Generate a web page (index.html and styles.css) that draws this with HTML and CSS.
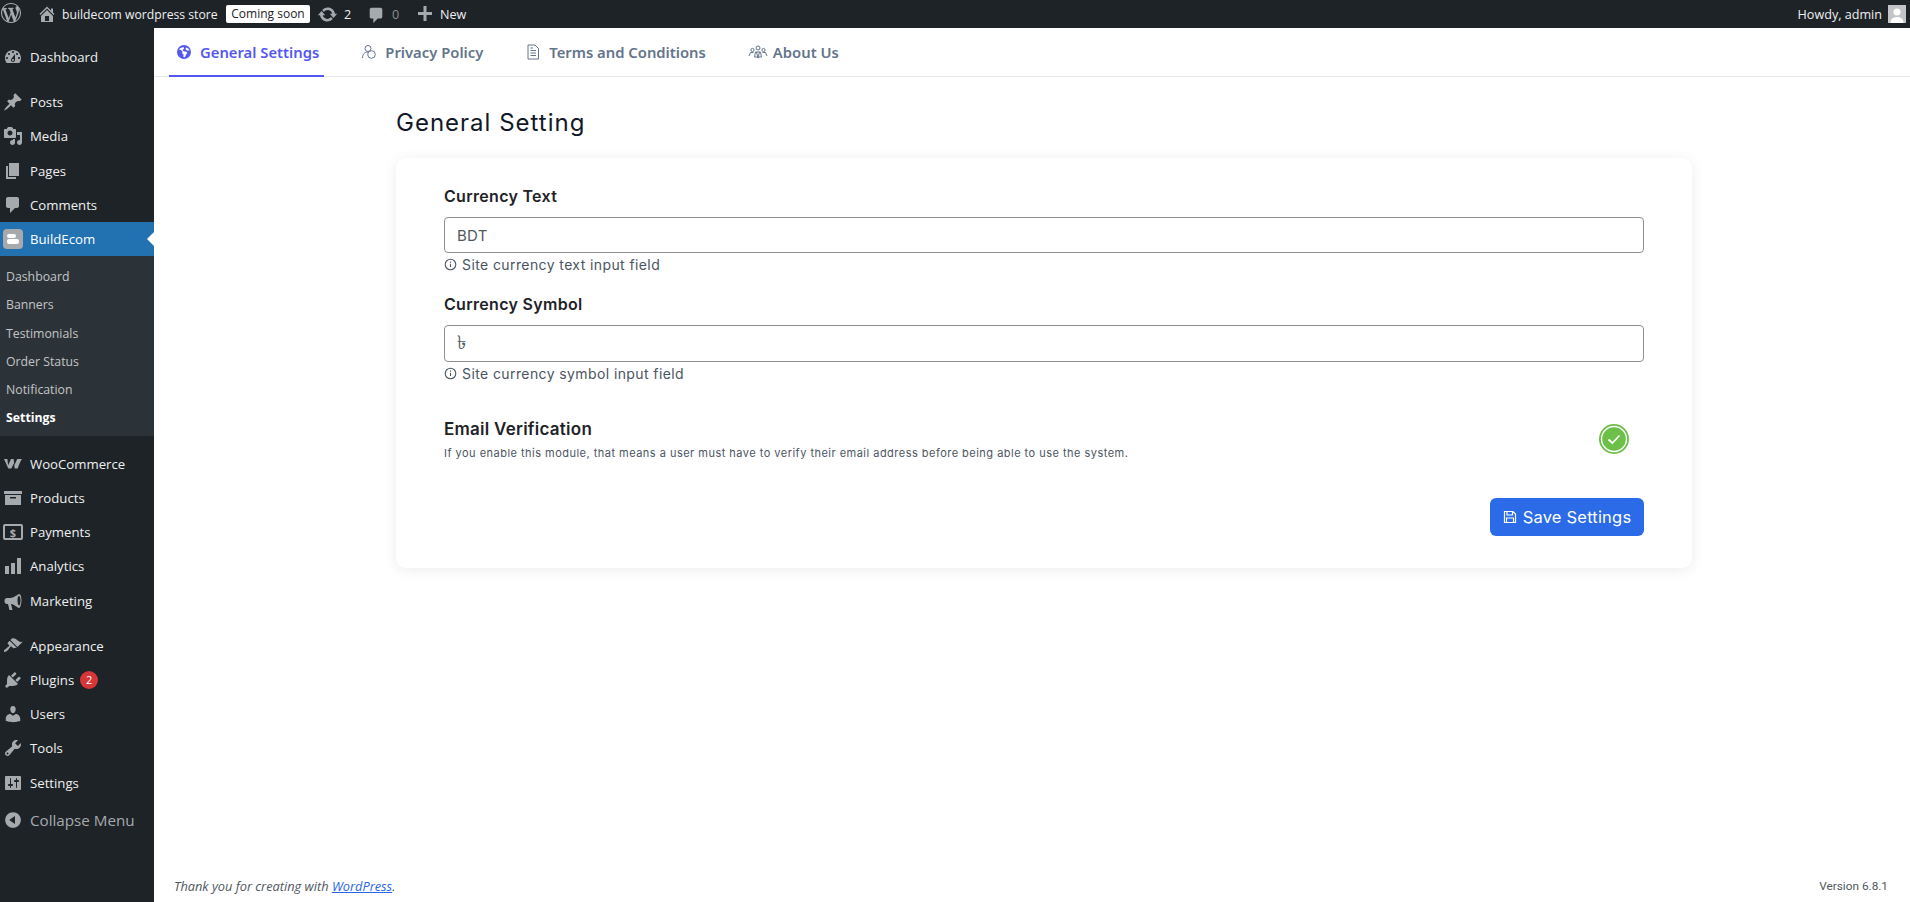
FILE: index.html
```html
<!DOCTYPE html>
<html lang="en">
<head>
    <meta charset="UTF-8">
    <title>General Settings - BuildEcom</title>
    <link rel="stylesheet" href="styles.css">
</head>
<body>
    <!-- Admin bar -->
    <div class="adminbar">
        <div class="bar-left">
            <svg class="bar-logo" viewBox="0 0 20 20"><path d="M20 10c0-5.51-4.49-10-10-10C4.48 0 0 4.49 0 10c0 5.52 4.48 10 10 10 5.51 0 10-4.48 10-10zM7.78 15.37L4.37 6.22c.55-.02 1.17-.08 1.17-.08.5-.06.44-1.13-.06-1.11 0 0-1.45.11-2.37.11-.18 0-.37 0-.58-.01C4.12 2.69 6.87 1.11 10 1.11c2.33 0 4.45.87 6.05 2.34-.68-.11-1.65.39-1.65 1.58 0 .74.45 1.36.9 2.1.35.61.55 1.36.55 2.46 0 1.49-1.4 5-1.4 5l-3.03-8.37c.54-.02.82-.17.82-.17.5-.05.44-1.25-.06-1.22 0 0-1.44.12-2.38.12-.87 0-2.33-.12-2.33-.12-.5-.03-.56 1.2-.06 1.22l.92.08 1.26 3.41zM17.41 10c.24-.64.74-1.87.43-4.25.7 1.29 1.05 2.71 1.05 4.25 0 3.29-1.73 6.24-4.4 7.78.97-2.59 1.94-5.2 2.92-7.78zM6.1 18.09C3.12 16.65 1.11 13.53 1.11 10c0-1.3.23-2.48.72-3.59C3.25 10.3 4.67 14.2 6.1 18.09zm4.03-6.63l2.58 6.98c-.86.29-1.76.45-2.71.45-.79 0-1.57-.11-2.29-.33.81-2.38 1.62-4.74 2.42-7.1z"/></svg>
            <svg class="bar-icon home" viewBox="0 0 20 20"><path d="M16 8.5l1.53 1.53-1.06 1.06L10 4.62l-6.47 6.47-1.06-1.06L10 2.5l4 4v-2h2v4zm-6-2.46l6 5.99V18H4v-5.97zM12 17v-5H8v5h4z"/></svg>
            <span class="site-name">buildecom wordpress store</span>
            <span class="badge-soon">Coming soon</span>
            <svg class="bar-icon update" viewBox="0 0 20 20"><path d="M10.2 3.28c3.53 0 6.43 2.61 6.92 6h2.08l-3.5 4-3.5-4h2.32c-.45-1.97-2.21-3.45-4.32-3.45-1.45 0-2.73.71-3.54 1.78L4.95 5.66C6.23 4.2 8.11 3.28 10.2 3.28zm-.4 13.44c-3.52 0-6.43-2.61-6.92-6H.8l3.5-4c1.17 1.33 2.33 2.67 3.5 4H5.48c.45 1.97 2.21 3.45 4.32 3.45 1.45 0 2.73-.71 3.54-1.78l1.71 1.95c-1.28 1.46-3.15 2.38-5.25 2.38z"/></svg>
            <span class="count">2</span>
            <svg class="bar-icon comment" viewBox="0 0 20 20"><path d="M5 2h10c1.1 0 2 .9 2 2v8c0 1.1-.9 2-2 2h-3l-5 5v-5H5c-1.1 0-2-.9-2-2V4c0-1.1.9-2 2-2z"/></svg>
            <span class="count dim">0</span>
            <svg class="bar-icon plus" viewBox="0 0 20 20"><path d="M17 8v3h-5.5v6h-3v-6H3V8h5.5V2h3v6z"/></svg>
            <span class="new">New</span>
        </div>
        <div class="bar-right">
            <span>Howdy, admin</span>
            <span class="avatar">
                <svg viewBox="0 0 18 18"><circle cx="9" cy="7" r="3.6"/><path d="M2.5 18c0-4 2.6-6 6.5-6s6.5 2 6.5 6z"/></svg>
            </span>
        </div>
    </div>

    <div class="layout">
        <!-- Sidebar -->
        <div class="sidebar">
            <a class="item">
                <svg viewBox="0 0 20 20"><path d="M3.76 16h12.48c1.1-1.37 1.76-3.11 1.76-5 0-4.42-3.58-8-8-8s-8 3.58-8 8c0 1.89.66 3.63 1.76 5zM10 4c.55 0 1 .45 1 1s-.45 1-1 1-1-.45-1-1 .45-1 1-1zM6 6c.55 0 1 .45 1 1s-.45 1-1 1-1-.45-1-1 .45-1 1-1zm8 0c.55 0 1 .45 1 1s-.45 1-1 1-1-.45-1-1 .45-1 1-1zm-5.37 5.55L12 7v6c0 1.1-.9 2-2 2s-2-.9-2-2c0-.57.24-1.08.63-1.45zM4 10c.55 0 1 .45 1 1s-.45 1-1 1-1-.45-1-1 .45-1 1-1zm12 0c.55 0 1 .45 1 1s-.45 1-1 1-1-.45-1-1 .45-1 1-1zm-5 3c0-.55-.45-1-1-1s-1 .45-1 1 .45 1 1 1 1-.45 1-1z"/></svg>
                Dashboard
            </a>
            <div class="sep"></div>
            <a class="item">
                <svg viewBox="0 0 20 20"><path d="M10.44 3.02l1.82-1.82 6.36 6.35-1.83 1.82c-1.05-.68-2.48-.57-3.41.36l-.75.75c-.92.93-1.04 2.35-.35 3.41l-1.83 1.82-2.41-2.41-2.8 2.79c-.42.42-3.38 2.71-3.8 2.29s1.86-3.39 2.28-3.81l2.79-2.79L4.1 9.36l1.83-1.82c1.05.69 2.48.57 3.4-.36l.75-.75c.93-.92 1.05-2.35.36-3.41z"/></svg>
                Posts
            </a>
            <a class="item">
                <svg viewBox="0 0 20 20"><path d="M13 11V4c0-.55-.45-1-1-1h-1.67L9 1H5L3.67 3H2c-.55 0-1 .45-1 1v7c0 .55.45 1 1 1h10c.55 0 1-.45 1-1zM7 4.5c1.38 0 2.5 1.12 2.5 2.5S8.38 9.5 7 9.5 4.5 8.38 4.5 7 5.62 4.5 7 4.5zM14 6h5v10.5c0 1.38-1.12 2.5-2.5 2.5S14 17.88 14 16.5s1.12-2.5 2.5-2.5c.17 0 .34.02.5.05V9h-3V6zm-4 8.05V13h2v3.5c0 1.38-1.12 2.5-2.5 2.5S7 17.88 7 16.5 8.12 14 9.5 14c.17 0 .34.02.5.05z"/></svg>
                Media
            </a>
            <a class="item">
                <svg viewBox="0 0 20 20"><path d="M6 15V2h10v13H6zm-1 1h8v2H3V5h2v11z"/></svg>
                Pages
            </a>
            <a class="item">
                <svg viewBox="0 0 20 20"><path d="M5 2h9c1.1 0 2 .9 2 2v7c0 1.1-.9 2-2 2h-2l-5 5v-5H5c-1.1 0-2-.9-2-2V4c0-1.1.9-2 2-2z"/></svg>
                Comments
            </a>
            <a class="item current">
                <span class="be-logo"><i class="pill-a"></i><i class="pill-b"></i></span>
                BuildEcom
            </a>
            <div class="submenu">
                <a>Dashboard</a>
                <a>Banners</a>
                <a>Testimonials</a>
                <a>Order Status</a>
                <a>Notification</a>
                <a class="on">Settings</a>
            </div>
            <div class="sep"></div>
            <a class="item">
                <svg viewBox="0 0 20 20"><path d="M1 5h3.4l.7 6.2L8 5h2.6l.8 6.2L14.2 5c1.4 0 3.4-.2 4.8 0-.9 1.3-2.9 4.8-4.3 9.5h-3L11 9.3 8.3 14.5H5.3z"/></svg>
                WooCommerce
            </a>
            <a class="item">
                <svg viewBox="0 0 20 20"><path d="M1 3h18v3H1zM2 7h16v10H2zM7 9v1.5h6V9z" fill-rule="evenodd"/></svg>
                Products
            </a>
            <a class="item">
                <span class="pay-icon">$</span>
                Payments
            </a>
            <a class="item">
                <svg viewBox="0 0 20 20"><path d="M2 10h4v8H2zM8 7h4v11H8zM14 2h4v16h-4z"/></svg>
                Analytics
            </a>
            <a class="item">
                <svg viewBox="0 0 20 20"><path d="M18.5 9c0-3-1-6-2.5-6-1 0-4 3.5-9 4H4C2.5 7 1.5 8 1.5 10S2.5 13 4 13h1l1.5 6h3L8 13.1c3.6.6 6.6 3.9 8 3.9 1.5 0 2.5-5 2.5-8zM16 14.5c-.8 0-1.5-2.5-1.5-5.5S15.2 5 16 5s1.5 1.5 1.5 4.5-.7 5-1.5 5z" fill-rule="evenodd"/></svg>
                Marketing
            </a>
            <div class="sep"></div>
            <a class="item">
                <svg viewBox="0 0 20 20"><path d="M14.48 11.06L7.41 3.99l1.5-1.5c.5-.56 2.3-.47 3.51.32 1.21.8 1.43 1.28 2.91 2.1 1.18.64 2.45 1.26 4.45.85zm-.71.71L6.7 4.7 4.93 6.47c-.39.39-.39 1.02 0 1.41l1.06 1.06c.39.39.39 1.03 0 1.42-.6.6-1.43 1.11-2.21 1.69-.35.26-.7.53-1.01.84C1.43 13.23.4 14.84 1.19 15.63c.79.79 2.4-.24 3.74-1.58.31-.31.58-.66.84-1.01.58-.78 1.09-1.61 1.69-2.21.39-.39 1.02-.39 1.41 0l1.06 1.06c.39.39 1.02.39 1.41 0z"/></svg>
                Appearance
            </a>
            <a class="item">
                <svg viewBox="0 0 20 20"><path d="M13.11 4.36L9.87 7.6 8 5.73l3.24-3.24c.35-.34 1.05-.2 1.56.32.52.51.66 1.21.31 1.55zm-8 1.77l.91-1.12 9.01 9.01-1.19.84c-.71.71-2.63 1.16-3.82 1.16H6.14L4.9 17.26c-.59.59-1.54.59-2.12 0-.59-.58-.59-1.53 0-2.12l1.24-1.24v-3.88c0-1.13.4-3.19 1.09-3.89zm7.26 3.97l3.24-3.24c.34-.35 1.04-.21 1.55.31.52.51.66 1.21.31 1.55l-3.24 3.25z"/></svg>
                Plugins <span class="count-badge">2</span>
            </a>
            <a class="item">
                <svg viewBox="0 0 20 20"><path d="M10 9.25c-2.27 0-2.73-3.44-2.73-3.44C7 4.02 7.82 2 9.97 2c2.16 0 2.98 2.02 2.71 3.81 0 0-.41 3.44-2.68 3.44zm0 2.57L12.72 10c2.39 0 4.52 2.33 4.52 4.53v2.49s-3.65 1.13-7.24 1.13c-3.65 0-7.24-1.13-7.24-1.13v-2.49c0-2.25 1.94-4.48 4.47-4.48z"/></svg>
                Users
            </a>
            <a class="item">
                <svg viewBox="0 0 20 20"><path d="M16.68 9.77c-1.34 1.34-3.3 1.67-4.95.99l-5.41 6.52c-.99.99-2.59.99-3.58 0s-.99-2.59 0-3.57l6.52-5.42c-.68-1.65-.35-3.61.99-4.95 1.28-1.28 3.12-1.62 4.72-1.06l-2.89 2.89 2.82 2.82 2.86-2.87c.53 1.58.18 3.39-1.08 4.65zM3.81 16.21c.4.39 1.04.39 1.43 0 .4-.4.4-1.04 0-1.43-.39-.4-1.03-.4-1.43 0-.39.39-.39 1.03 0 1.43z"/></svg>
                Tools
            </a>
            <a class="item">
                <svg viewBox="0 0 20 20"><path d="M18 16V4c0-.55-.45-1-1-1H3c-.55 0-1 .45-1 1v12c0 .55.45 1 1 1h14c.55 0 1-.45 1-1zM8 11h1c.55 0 1 .45 1 1s-.45 1-1 1H8v1.5c0 .28-.22.5-.5.5s-.5-.22-.5-.5V13H6c-.55 0-1-.45-1-1s.45-1 1-1h1V5.5c0-.28.22-.5.5-.5s.5.22.5.5V11zm5-2h-1c-.55 0-1-.45-1-1s.45-1 1-1h1V5.5c0-.28.22-.5.5-.5s.5.22.5.5V7h1c.55 0 1 .45 1 1s-.45 1-1 1h-1v5.5c0 .28-.22.5-.5.5s-.5-.22-.5-.5V9z"/></svg>
                Settings
            </a>
            <a class="item collapse">
                <svg viewBox="0 0 20 20"><path d="M10 2.16c4.33 0 7.84 3.51 7.84 7.84s-3.51 7.84-7.84 7.84S2.16 14.33 2.16 10 5.71 2.16 10 2.16zm2 11.72V6.12L6.18 9.97z"/></svg>
                Collapse Menu
            </a>
        </div>

        <!-- Main -->
        <div class="main">
            <div class="tabs">
                <a class="tab active">
                    <svg viewBox="0 0 16 16" class="tab-icon"><path fill-rule="evenodd" d="M8 1a7 7 0 1 0 0 14A7 7 0 0 0 8 1zM3 5.5l2 .5 1.5 1.5L6 9l1.5 1.5V13l1.5.2 1-2.7 1.5-1.5-1.5-1.5H8L6.5 6 8 4.8V3.2c-2-.2-3.8.6-5 2.3zM10 3.5l-.5 1.5 1.5 1.5h2.5c-.5-1.5-2-2.7-3.5-3z"/></svg>
                    General Settings
                </a>
                <a class="tab">
                    <svg viewBox="0 0 16 16" class="tab-icon line"><circle cx="7" cy="4.5" r="3"/><path d="M1.5 14c0-3.5 1.8-6 5.5-6"/><circle cx="10.5" cy="10.5" r="3.8"/></svg>
                    Privacy Policy
                </a>
                <a class="tab">
                    <svg viewBox="0 0 16 16" class="tab-icon line"><path d="M3 1h7l3.5 3.5V15H3zM5.500 6.500h5.500M5.500 9h5.500M5.500 11.500h5.500M5.500 4h2.500"/></svg>
                    Terms and Conditions
                </a>
                <a class="tab">
                    <svg viewBox="0 0 20 16" class="tab-icon line wide"><circle cx="10" cy="4" r="2"/><circle cx="4.5" cy="6" r="1.6"/><circle cx="15.5" cy="6" r="1.6"/><path d="M6.5 13l1-5h5l1 5zM1 12l1.5-3.5h3M19 12l-1.5-3.5h-3M8.5 8l1.5 6 1.5-6"/></svg>
                    About Us
                </a>
            </div>

            <div class="content">
                <h1 class="page-title">General Setting</h1>
                <div class="card">
                    <label class="field-label">Currency Text</label>
                    <input class="field-input" type="text" value="BDT">
                    <p class="hint">
                        <svg viewBox="0 0 12 12"><circle cx="6" cy="6" r="4.9"/><path d="M6 5.4v3M6 3.3v1"/></svg>
                        Site currency text input field
                    </p>

                    <label class="field-label second">Currency Symbol</label>
                    <input class="field-input tall" type="text" value="৳">
                    <p class="hint">
                        <svg viewBox="0 0 12 12"><circle cx="6" cy="6" r="4.9"/><path d="M6 5.4v3M6 3.3v1"/></svg>
                        Site currency symbol input field
                    </p>

                    <div class="module-row">
                        <div>
                            <h3>Email Verification</h3>
                            <p>If you enable this module, that means a user must have to verify their email address before being able to use the system.</p>
                        </div>
                        <span class="toggle">
                            <svg viewBox="0 0 30 30"><circle cx="15" cy="15" r="15" fill="#6cbf47"/><circle cx="15" cy="15" r="12.5" fill="none" stroke="#fff" stroke-width="1.4"/><path d="M9.5 15.5l3.8 3.5 7.2-7.5" fill="none" stroke="#fff" stroke-width="1.7"/></svg>
                        </span>
                    </div>

                    <div class="actions">
                        <button class="save-btn">
                            <svg viewBox="0 0 14 14"><path d="M1.5 1.5h8.5l2.5 2.5v8.5h-11zM4 1.5v3.5h5.5V1.5M3.5 12.500V8h7v4.500"/></svg>
                            Save Settings
                        </button>
                    </div>
                </div>
            </div>

            <div class="footer">
                <span class="thanks">Thank you for creating with <a>WordPress</a>.</span>
                <span class="version">Version 6.8.1</span>
            </div>
        </div>
    </div>
</body>
</html>
```

FILE: styles.css
```css
* {
    margin: 0;
    padding: 0;
    box-sizing: border-box;
}

html, body {
    height: 902px;
    overflow: hidden;
}

body {
    background: #fff;
    color: #1d2327;
    font-family: "Open Sans", sans-serif;
    font-size: 13px;
}

/* Admin bar */
.adminbar {
    display: flex;
    justify-content: space-between;
    align-items: center;
    height: 28px;
    background: #1d2327;
    color: #f0f0f1;
    font-size: 12.6px;
}

.bar-left, .bar-right {
    display: flex;
    align-items: center;
}

.bar-logo {
    width: 20px;
    height: 20px;
    margin: -3px 0 0 1px;
    fill: #a7aaad;
}

.bar-icon {
    fill: #a7aaad;
    flex: none;
}

.home {
    width: 20px;
    height: 20px;
    margin-left: 16px;
}

.site-name {
    margin-left: 5px;
    width: 159px;
    font-size: 12.2px;
    white-space: nowrap;
}

.badge-soon {
    margin: 0 0 0 5px;
    width: 84px;
    height: 18px;
    line-height: 18px;
    background: #fff;
    color: #1d2327;
    border-radius: 2px;
    text-align: center;
    font-size: 12px;
}

.update {
    width: 21px;
    height: 21px;
    margin-left: 7px;
}

.count {
    margin-left: 6px;
    width: 8px;
}

.count.dim {
    color: #8c8f94;
    margin-left: 7px;
}

.comment {
    width: 18px;
    height: 18px;
    margin: 2px 0 0 15px;
}

.plus {
    width: 20px;
    height: 20px;
    margin-left: 15px;
}

.new {
    margin-left: 5px;
}

.bar-right {
    gap: 6px;
    padding-right: 4px;
}

.avatar {
    display: block;
    width: 18px;
    height: 18px;
    background: #c3c4c7;
    overflow: hidden;
}

.avatar svg {
    display: block;
    fill: #fff;
}

/* Layout */
.layout {
    display: flex;
    height: 874px;
}

/* Sidebar */
.sidebar {
    width: 154px;
    flex: none;
    background: #1d2327;
    padding-top: 12px;
}

.item {
    display: flex;
    align-items: center;
    position: relative;
    height: 34.2px;
    padding-left: 3px;
    color: #f0f0f1;
    font-size: 13.2px;
}

.item svg {
    width: 20px;
    height: 20px;
    flex: none;
    fill: #a7aaad;
    margin-right: 7px;
}

.sep {
    height: 11px;
}

.item.current {
    background: #2271b1;
    color: #fff;
}

.item.current::after {
    content: "";
    position: absolute;
    right: 0;
    top: 10px;
    border: 7px solid transparent;
    border-right-color: #fff;
    border-left-width: 0;
}

.be-logo {
    display: flex;
    flex-direction: column;
    align-items: center;
    justify-content: center;
    gap: 1px;
    width: 20px;
    height: 20px;
    flex: none;
    margin-right: 7px;
    background: #a7aaad;
    border-radius: 4px;
}

.be-logo i {
    display: block;
    background: #fff;
    border-radius: 2px;
}

.pill-a {
    width: 9px;
    height: 4px;
    margin-left: -3px;
}

.pill-b {
    width: 12px;
    height: 5px;
}

.submenu {
    background: #2c3338;
    padding: 7px 0 3.5px;
}

.submenu a {
    display: block;
    height: 28.2px;
    line-height: 28.2px;
    padding-left: 6px;
    color: #c3c4c7;
    font-size: 12.3px;
}

.submenu a.on {
    color: #fff;
    font-weight: 700;
}

.pay-icon {
    display: block;
    width: 20px;
    height: 16px;
    line-height: 13px;
    flex: none;
    margin-right: 7px;
    border: 2px solid #a7aaad;
    border-radius: 2px;
    color: #a7aaad;
    font-size: 11px;
    font-weight: 700;
    text-align: center;
}

.count-badge {
    display: inline-block;
    width: 18px;
    height: 18px;
    line-height: 18px;
    margin-left: 6px;
    background: #d63638;
    border-radius: 50%;
    color: #fff;
    font-size: 11px;
    text-align: center;
}

.collapse {
    margin-top: 3px;
    color: #a7aaad;
    font-size: 15.2px;
}

/* Main */
.main {
    flex: 1;
    display: flex;
    flex-direction: column;
    min-width: 0;
}

.tabs {
    display: flex;
    gap: 30px;
    height: 49px;
    padding-left: 15px;
    border-bottom: 1px solid #e5e7eb;
}

.tab {
    display: flex;
    align-items: center;
    height: 49px;
    padding: 0 5px 0 7px;
    border-bottom: 2px solid transparent;
    color: #64748b;
    font-family: "Noto Sans", sans-serif;
    font-size: 14.8px;
    font-weight: 600;
}

.tab.active {
    color: #5558f0;
    border-bottom-color: #5558f0;
}

.tab-icon {
    width: 16px;
    height: 16px;
    margin-right: 8px;
    fill: currentColor;
}

.tab-icon.line {
    fill: none;
    stroke: currentColor;
    stroke-width: 1;
}

.tab-icon.wide {
    width: 20px;
    margin-right: 5px;
}

.content {
    padding: 0 218px 0 242px;
}

.page-title {
    margin-top: 31px;
    height: 30px;
    line-height: 30px;
    color: #111827;
    font-family: Inter, sans-serif;
    font-size: 24px;
    font-weight: 400;
    letter-spacing: 1px;
}

.card {
    margin-top: 20px;
    height: 410px;
    padding: 28px 48px 0 48px;
    background: #fff;
    border-radius: 10px;
    box-shadow: 0 2px 14px rgba(0, 0, 0, 0.08);
}

.field-label {
    display: block;
    height: 20px;
    line-height: 20px;
    color: #1f2328;
    font-family: Inter, sans-serif;
    font-size: 16px;
    font-weight: 600;
    letter-spacing: 0.3px;
}

.field-label.second {
    margin-top: 20px;
}

.field-input {
    display: block;
    width: 100%;
    height: 36px;
    margin-top: 11px;
    padding: 0 12px;
    border: 1px solid #8c8f94;
    border-radius: 4px;
    background: #fff;
    color: #50575e;
    font-family: Inter, "Noto Sans", "DejaVu Sans", sans-serif;
    font-size: 15px;
    letter-spacing: 0.3px;
    outline: none;
}

.field-input.tall {
    height: 37px;
    font-size: 19px;
}

.hint {
    display: flex;
    align-items: center;
    gap: 5px;
    height: 20px;
    margin-top: 1px;
    color: #4b5563;
    font-family: Inter, sans-serif;
    font-size: 14px;
    letter-spacing: 0.4px;
}

.hint svg {
    width: 13px;
    height: 13px;
    fill: none;
    stroke: #4b5563;
    stroke-width: 1;
}

.module-row {
    display: flex;
    justify-content: space-between;
    align-items: center;
    margin-top: 36px;
    padding-right: 15px;
}

.module-row h3 {
    height: 21px;
    line-height: 21px;
    color: #1f2328;
    font-family: Inter, sans-serif;
    font-size: 17px;
    font-weight: 600;
    letter-spacing: 0.25px;
}

.module-row p {
    margin-top: 5.5px;
    color: #4b5563;
    font-family: Inter, sans-serif;
    font-size: 11px;
    letter-spacing: 0.48px;
}

.toggle {
    display: block;
    width: 30px;
    height: 30px;
}

.toggle svg {
    display: block;
}

.actions {
    display: flex;
    justify-content: flex-end;
    margin-top: 38px;
}

.save-btn {
    display: flex;
    align-items: center;
    justify-content: center;
    gap: 6px;
    width: 154px;
    height: 38px;
    border: none;
    border-radius: 6px;
    background: #2b6be8;
    color: #fff;
    font-family: Inter, sans-serif;
    font-size: 16.5px;
    letter-spacing: 0.2px;
}

.save-btn svg {
    width: 14px;
    height: 14px;
    fill: none;
    stroke: #fff;
    stroke-width: 1.2;
}

/* Footer */
.footer {
    display: flex;
    justify-content: space-between;
    margin-top: auto;
    padding: 0 22px 4px 20px;
    height: 25px;
    color: #50575e;
    font-size: 12.8px;
}

.version {
    padding-top: 2px;
    font-family: Roboto, sans-serif;
    font-size: 11.8px;
}

.thanks {
    font-style: italic;
}

.thanks a {
    color: #2a66e8;
    text-decoration: underline;
}
```
